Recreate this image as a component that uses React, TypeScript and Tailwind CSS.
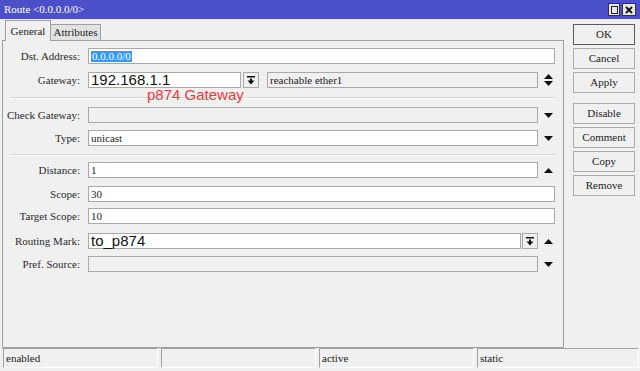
import React from 'react';

const Up = () => (
  <svg width="9" height="5" viewBox="0 0 9 5">
    <path d="M0 5 L4.5 0 L9 5 Z" fill="#111" />
  </svg>
);

const Down = () => (
  <svg width="9" height="5" viewBox="0 0 9 5">
    <path d="M0 0 L9 0 L4.5 5 Z" fill="#111" />
  </svg>
);

const UpDown = () => (
  <svg width="9" height="12" viewBox="0 0 9 12">
    <path d="M0 5 L4.5 0 L9 5 Z" fill="#111" />
    <path d="M0 7 L9 7 L4.5 12 Z" fill="#111" />
  </svg>
);

const DropBtn = () => (
  <div className="flex h-full w-[16px] items-center justify-center border border-[#a9a9a9] bg-[#f0f0f0]">
    <svg width="8" height="9" viewBox="0 0 8 9">
      <rect x="0" y="0" width="8" height="1.5" fill="#111" />
      <rect x="3" y="2.5" width="2" height="2.5" fill="#111" />
      <path d="M0.5 4.5 L7.5 4.5 L4 8.5 Z" fill="#111" />
    </svg>
  </div>
);

const Slot: React.FC<{ children?: React.ReactNode }> = ({ children }) => (
  <div className="flex h-full w-[21px] items-center justify-center">{children}</div>
);

const Field: React.FC<{ w: string; gray?: boolean; children?: React.ReactNode }> = ({ w, gray, children }) => (
  <div
    className={`flex h-full items-center border border-[#a9a9a9] pl-[2px] text-[11px] leading-none ${w} ${
      gray ? 'bg-[#f0f0f0]' : 'bg-white'
    }`}
  >
    {children}
  </div>
);

const Row: React.FC<{ label: string; mt: string; children: React.ReactNode }> = ({ label, mt, children }) => (
  <div className={`flex h-[16px] items-center ${mt}`}>
    <div className="w-[77px] text-right text-[11px] leading-none text-[#2a2a2a]">{label}</div>
    <div className="ml-[8px] flex h-full items-center">{children}</div>
  </div>
);

const Sep: React.FC<{ mt: string }> = ({ mt }) => (
  <div className={`ml-[7px] h-[2px] w-[545px] border-t border-b border-t-[#d6d6d6] border-b-white ${mt}`} />
);

const SideButton: React.FC<{ label: string; mt: string; primary?: boolean }> = ({ label, mt, primary }) => (
  <button
    className={`flex h-[21px] w-[62px] items-center justify-center border bg-[#f0f0f0] text-[11px] leading-none text-[#222] ${mt} ${
      primary ? 'border-[#5a5a5a]' : 'border-[#acacac]'
    }`}
  >
    {label}
  </button>
);

const StatusCell: React.FC<{ w: string; text?: string }> = ({ w, text }) => (
  <div
    className={`flex h-[20px] items-center border border-t-[#a0a0a0] border-l-[#a0a0a0] border-r-white border-b-white pl-[2px] text-[11px] leading-none ${w}`}
  >
    {text}
  </div>
);

const App: React.FC = () => {
  return (
    <div className="flex h-[371px] w-[640px] flex-col overflow-hidden bg-[#f0f0f0] font-['Liberation_Serif',serif] text-[#222]">
      {/* Title bar */}
      <div className="flex h-[19px] items-center justify-between bg-[#4b50c9] pl-[4px] pr-[4px]">
        <span className="text-[11px] leading-none text-white">Route &lt;0.0.0.0/0&gt;</span>
        <div className="flex items-center gap-[2px]">
          <div className="flex h-[13px] w-[12px] items-center justify-center border border-[#333] bg-[#e6e6e6]">
            <div className="h-[8px] w-[7px] border border-[#222]" />
          </div>
          <div className="flex h-[13px] w-[14px] items-center justify-center border border-[#333] bg-[#e6e6e6]">
            <svg width="8" height="8" viewBox="0 0 8 8">
              <path d="M1 1 L7 7 M7 1 L1 7" stroke="#111" strokeWidth="1.8" />
            </svg>
          </div>
        </div>
      </div>

      {/* Body */}
      <div className="flex h-[329px]">
        <div className="flex w-[564px] flex-col pl-[2px]">
          {/* Tabs */}
          <div className="flex h-[21px] items-end pl-[3px]">
            <div className="relative z-10 -mb-px flex h-[21px] w-[46px] items-center justify-center border border-b-0 border-[#a0a0a0] bg-[#f0f0f0] text-[11px] leading-none">
              General
            </div>
            <div className="flex h-[16px] w-[50px] items-center justify-center border border-l-0 border-b-0 border-[#a0a0a0] bg-[#e2e2e2] text-[11px] leading-none">
              Attributes
            </div>
          </div>

          {/* Panel */}
          <div className="relative flex h-[308px] flex-col border border-[#a0a0a0]">
            <Row label="Dst. Address:" mt="mt-[7px]">
              <Field w="w-[467px]">
                <span className="bg-[#3399ff] px-[1px] text-white">0.0.0.0/0</span>
              </Field>
            </Row>
            <Row label="Gateway:" mt="mt-[8px]">
              <Field w="w-[153px]">
                <span className="font-['Liberation_Sans',sans-serif] text-[15px] leading-[14px] text-[#111]">192.168.1.1</span>
              </Field>
              <div className="ml-[2px] h-full">
                <DropBtn />
              </div>
              <div className="ml-[8px] h-full">
                <Field w="w-[271px]" gray>
                  reachable ether1
                </Field>
              </div>
              <Slot>
                <UpDown />
              </Slot>
            </Row>
            <span className="absolute left-[144px] top-[46px] font-['Liberation_Sans',sans-serif] text-[15px] leading-none text-[#f03a3a]">
              p874 Gateway
            </span>
            <Sep mt="mt-[9px]" />
            <Row label="Check Gateway:" mt="mt-[8px]">
              <Field w="w-[450px]" gray />
              <Slot>
                <Down />
              </Slot>
            </Row>
            <Row label="Type:" mt="mt-[7px]">
              <Field w="w-[450px]">unicast</Field>
              <Slot>
                <Down />
              </Slot>
            </Row>
            <Sep mt="mt-[8px]" />
            <Row label="Distance:" mt="mt-[6px]">
              <Field w="w-[450px]">1</Field>
              <Slot>
                <Up />
              </Slot>
            </Row>
            <Row label="Scope:" mt="mt-[8px]">
              <Field w="w-[467px]">30</Field>
            </Row>
            <Row label="Target Scope:" mt="mt-[6px]">
              <Field w="w-[467px]">10</Field>
            </Row>
            <Row label="Routing Mark:" mt="mt-[9px]">
              <Field w="w-[433px]">
                <span className="font-['Liberation_Sans',sans-serif] text-[15px] leading-[14px] text-[#111]">to_p874</span>
              </Field>
              <div className="ml-[1px] h-full">
                <DropBtn />
              </div>
              <Slot>
                <Up />
              </Slot>
            </Row>
            <Row label="Pref. Source:" mt="mt-[7px]">
              <Field w="w-[450px]" gray />
              <Slot>
                <Down />
              </Slot>
            </Row>
          </div>
        </div>

        {/* Side buttons */}
        <div className="ml-[9px] flex w-[62px] flex-col">
          <SideButton label="OK" mt="mt-[5px]" primary />
          <SideButton label="Cancel" mt="mt-[3px]" />
          <SideButton label="Apply" mt="mt-[3px]" />
          <SideButton label="Disable" mt="mt-[10px]" />
          <SideButton label="Comment" mt="mt-[3px]" />
          <SideButton label="Copy" mt="mt-[3px]" />
          <SideButton label="Remove" mt="mt-[3px]" />
        </div>
      </div>

      {/* Status bar */}
      <div className="flex gap-[3px] pl-[3px]">
        <StatusCell w="w-[155px]" text="enabled" />
        <StatusCell w="w-[155px]" />
        <StatusCell w="w-[155px]" text="active" />
        <StatusCell w="w-[162px]" text="static" />
      </div>
    </div>
  );
};

export default App;
